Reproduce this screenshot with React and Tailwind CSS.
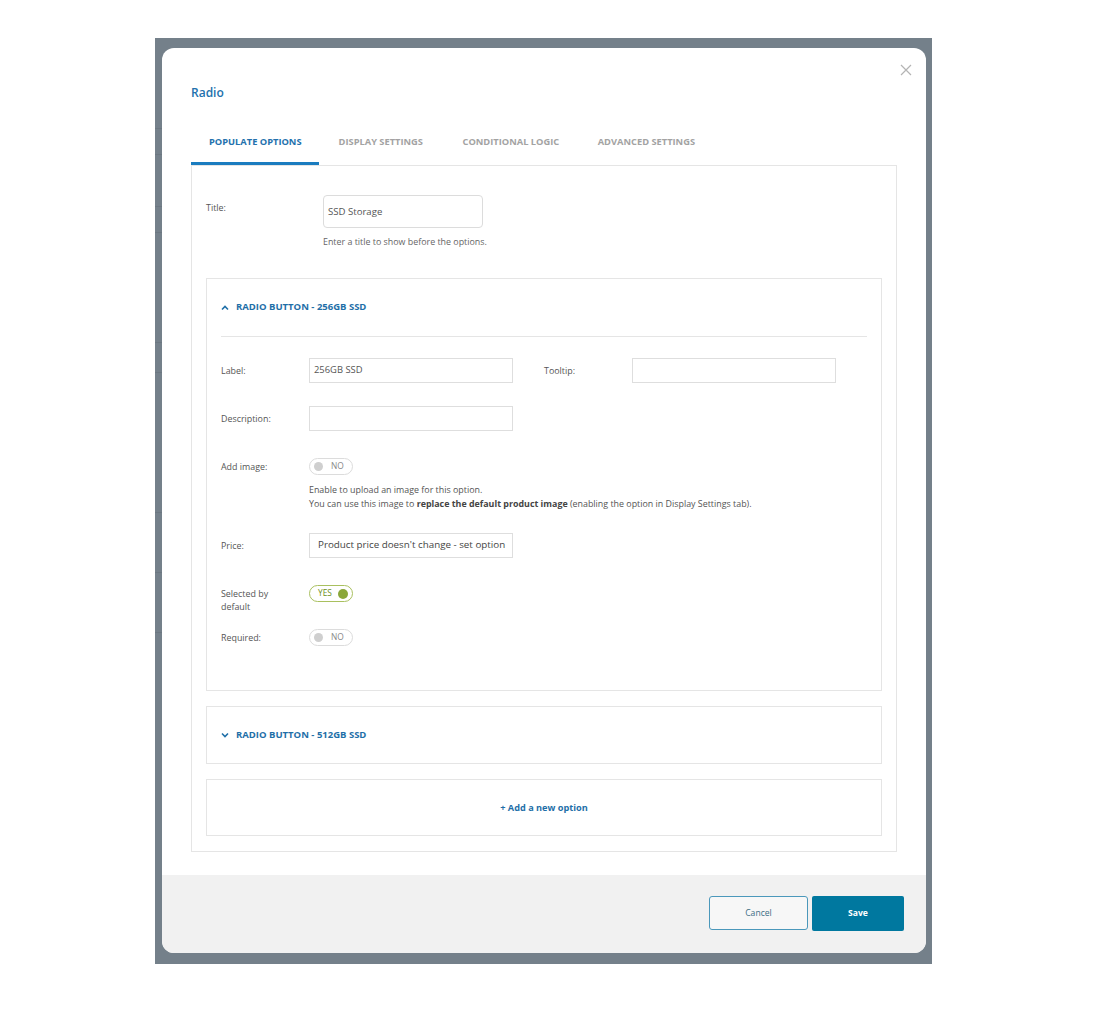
import React from "react";

const F = { fontFamily: '"Open Sans", "Liberation Sans", sans-serif' };

function Toggle({ on }) {
  if (on) {
    return (
      <div className="flex h-[25px] items-center">
        <div className="flex h-[17px] w-[44px] items-center justify-between rounded-full border border-[#a9c05f] bg-white pl-[8px] pr-[4px]">
          <span className="text-[8.4px] leading-none text-[#6f8f22]">YES</span>
          <span className="h-[10px] w-[10px] rounded-full bg-[#8aa73a]" />
        </div>
      </div>
    );
  }
  return (
    <div className="flex h-[25px] items-center">
      <div className="flex h-[17px] w-[44px] items-center gap-[8px] rounded-full border border-[#dcdcdc] bg-white pl-[4px]">
        <span className="h-[9px] w-[9px] rounded-full bg-[#cfcfcf]" />
        <span className="text-[8.4px] leading-none text-[#888]">NO</span>
      </div>
    </div>
  );
}

function Label({ children }) {
  return (
    <div className="w-[88px] shrink-0 pt-[6px] text-[8.9px] leading-[13px] text-[#555]">
      {children}
    </div>
  );
}

function Input({ value, big }) {
  return (
    <div
      className={
        "flex h-[25px] w-[204px] items-center border border-[#dedede] bg-white " +
        (big ? "pl-[8px] text-[9.8px] text-[#444]" : "pl-[4px] text-[9.4px] text-[#555]")
      }
    >
      {value}
    </div>
  );
}

function Chevron({ up }) {
  return (
    <svg width="8" height="6" viewBox="0 0 8 6" className="shrink-0">
      {up ? (
        <path d="M1 4.5 L4 1.5 L7 4.5" fill="none" stroke="#1f6fa8" strokeWidth="1.6" />
      ) : (
        <path d="M1 1.5 L4 4.5 L7 1.5" fill="none" stroke="#1f6fa8" strokeWidth="1.6" />
      )}
    </svg>
  );
}

export default function App() {
  return (
    <div className="min-h-[1012px] w-full bg-white pl-[155px] pt-[38px]" style={F}>
      <div className="flex h-[926px] w-[777px] bg-[#74808a]">
        {/* underlying page peeking through */}
        <div className="flex w-[7px] shrink-0 flex-col">
          <div className="h-[91px] border-b border-[#6c7781]" />
          <div className="h-[26px] border-b border-[#6c7781]" />
          <div className="h-[52px] border-b border-[#6c7781]" />
          <div className="h-[26px] border-b border-[#6c7781]" />
          <div className="h-[110px] border-b border-[#6c7781]" />
          <div className="h-[30px] border-b border-[#6c7781]" />
          <div className="h-[140px] border-b border-[#6c7781]" />
          <div className="h-[60px] border-b border-[#6c7781]" />
          <div className="h-[60px] border-b border-[#6c7781]" />
        </div>
        <div className="pt-[10px]">
          <div className="relative flex h-[905px] w-[764px] flex-col overflow-hidden rounded-[12px] bg-white">
            {/* close */}
            <svg
              width="12"
              height="12"
              viewBox="0 0 12 12"
              className="absolute left-[738px] top-[16px]"
            >
              <path d="M1 1 L11 11 M11 1 L1 11" stroke="#b4b4b4" strokeWidth="1.2" />
            </svg>

            <div className="flex-1 px-[29px]">
              <div className="pt-[38px] text-[12px] font-semibold leading-[14px] text-[#2371ad]">
                Radio
              </div>

              {/* tabs */}
              <div className="mt-[25px] flex h-[40px]">
                <div className="flex h-[40px] items-center border-b-[3px] border-[#1a7cbf] pb-[4px] pl-[18px] pr-[17px] text-[9.3px] font-bold text-[#2371ad]">
                  POPULATE OPTIONS
                </div>
                <div className="flex h-[40px] items-center px-[20px] pb-[7px] text-[9.3px] font-bold text-[#a3a3a3]">
                  DISPLAY SETTINGS
                </div>
                <div className="flex h-[40px] items-center px-[19.5px] pb-[7px] text-[9.3px] font-bold text-[#a3a3a3]">
                  CONDITIONAL LOGIC
                </div>
                <div className="flex h-[40px] items-center px-[19px] pb-[7px] text-[9.3px] font-bold text-[#a3a3a3]">
                  ADVANCED SETTINGS
                </div>
              </div>

              {/* panel */}
              <div className="h-[687px] border border-[#e5e5e5] px-[14px] pt-[29px]">
                <div className="flex">
                  <div className="w-[117px] shrink-0 pt-[6px] text-[8.9px] leading-[13px] text-[#555]">
                    Title:
                  </div>
                  <div>
                    <div className="flex h-[33px] w-[160px] items-center rounded-[4px] border border-[#dcdcdc] pl-[4px] pt-[2px] text-[9.6px] text-[#555]">
                      SSD Storage
                    </div>
                    <div className="mt-[7px] text-[8.9px] leading-[13px] text-[#666]">
                      Enter a title to show before the options.
                    </div>
                  </div>
                </div>

                {/* option 1 */}
                <div className="mt-[30px] h-[413px] border border-[#e5e5e5] px-[14px]">
                  <div className="flex h-[57px] items-center gap-[7px]">
                    <Chevron up />
                    <span className="text-[9.5px] font-bold text-[#1f6fa8]">
                      RADIO BUTTON - 256GB SSD
                    </span>
                  </div>
                  <div className="h-px bg-[#e5e5e5]" />

                  <div className="mt-[21px] flex">
                    <Label>Label:</Label>
                    <Input value="256GB SSD" />
                    <div className="w-[31px]" />
                    <Label>Tooltip:</Label>
                    <Input value="" />
                  </div>

                  <div className="mt-[23px] flex">
                    <Label>Description:</Label>
                    <Input value="" />
                  </div>

                  <div className="mt-[23px] flex">
                    <Label>Add image:</Label>
                    <div>
                      <Toggle />
                      <div className="mt-[4px] text-[8.9px] leading-[14px] text-[#555]">
                        <div>Enable to upload an image for this option.</div>
                        <div>
                          You can use this image to{" "}
                          <span className="font-bold text-[#444]">
                            replace the default product image
                          </span>{" "}
                          (enabling the option in Display Settings tab).
                        </div>
                      </div>
                    </div>
                  </div>

                  <div className="mt-[22px] flex">
                    <Label>Price:</Label>
                    <Input value="Product price doesn't change - set option" big />
                  </div>

                  <div className="mt-[23px] flex">
                    <div className="w-[88px] shrink-0 pt-[5.5px] text-[8.9px] leading-[13px] text-[#555]">
                      Selected by
                      <br />
                      default
                    </div>
                    <Toggle on />
                  </div>

                  <div className="mt-[12px] flex">
                    <Label>Required:</Label>
                    <Toggle />
                  </div>
                </div>

                {/* option 2 */}
                <div className="mt-[15px] flex h-[58px] items-center gap-[7px] border border-[#e5e5e5] pl-[14px]">
                  <Chevron />
                  <span className="text-[9.5px] font-bold text-[#1f6fa8]">
                    RADIO BUTTON - 512GB SSD
                  </span>
                </div>

                {/* add */}
                <div className="mt-[15px] flex h-[57px] items-center justify-center border border-[#e5e5e5] text-[9.2px] font-bold text-[#1f6fa8]">
                  + Add a new option
                </div>
              </div>
            </div>

            {/* footer */}
            <div className="flex h-[78px] shrink-0 items-start justify-end gap-[4px] bg-[#f1f1f1] pr-[22px] pt-[21px]">
              <div className="flex h-[34px] w-[99px] items-center justify-center rounded-[3px] border border-[#4b98bb] bg-[#f7f7f7] text-[8.6px] text-[#3b6d84]">
                Cancel
              </div>
              <div className="flex h-[35px] w-[92px] items-center justify-center rounded-[2px] bg-[#00789f] text-[8.6px] font-bold text-white">
                Save
              </div>
            </div>
          </div>
        </div>
      </div>
    </div>
  );
}
